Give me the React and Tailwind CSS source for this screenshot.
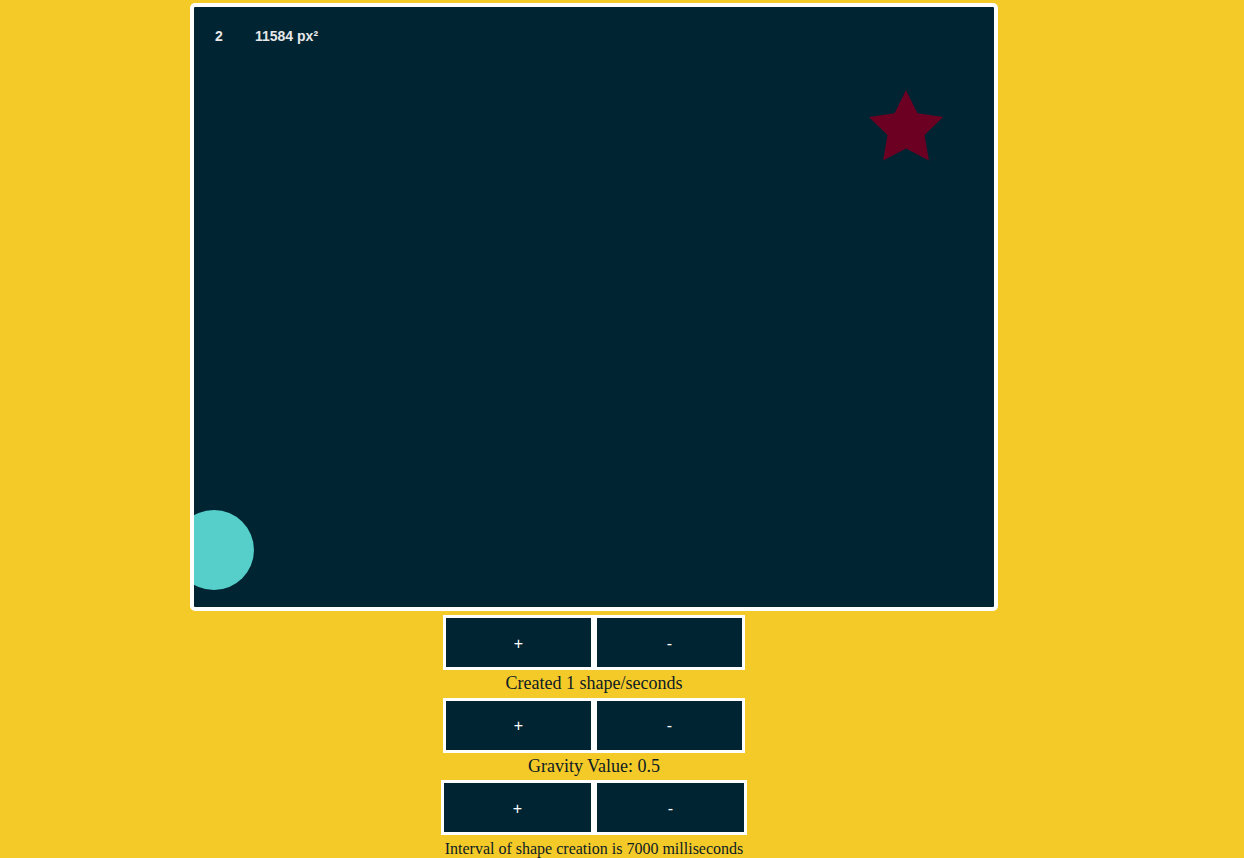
import React from 'react';

const canvasBg = 'bg-[#012433]';

function ControlRow({ wide }) {
	const size = wide ? 'w-[153px]' : 'w-[151px]';
	return (
		<div className="flex">
			<button
				className={`${size} h-[55px] pt-[2px] border-[3px] border-white ${canvasBg} text-white text-[16px] font-['Liberation_Sans',Arial,sans-serif]`}>
				+
			</button>
			<button
				className={`${size} h-[55px] pt-[2px] border-[3px] border-white ${canvasBg} text-white text-[16px] font-['Liberation_Sans',Arial,sans-serif]`}>
				-
			</button>
		</div>
	);
}

function Label({ children, small }) {
	return (
		<p
			className={`h-[27.5px] leading-[27.5px] ${small ? 'text-[16px]' : 'text-[18px]'} text-[#0d1b24] font-['Liberation_Serif','Times_New_Roman',serif] whitespace-nowrap`}>
			{children}
		</p>
	);
}

// 5-point star with inner radius at half the outer one
function starPoints(cx, cy, outer, inner) {
	const pts = [];
	for (let i = 0; i < 10; i++) {
		const r = i % 2 === 0 ? outer : inner;
		const a = -Math.PI / 2 + (i * Math.PI) / 5;
		pts.push(`${(cx + r * Math.cos(a)).toFixed(2)},${(cy + r * Math.sin(a)).toFixed(2)}`);
	}
	return pts.join(' ');
}

export default function App() {
	return (
		<div className="min-h-screen bg-[#f4ca29]">
			<div className="w-[1188px] flex flex-col items-center pt-[3px]">
				{/* Game canvas */}
				<div
					className={`relative w-[808px] h-[608px] border-4 border-white rounded-[5px] ${canvasBg} overflow-hidden`}>
					<svg
						width="800"
						height="600"
						viewBox="0 0 800 600"
						className="block">
						<circle cx="20" cy="543" r="40" fill="#56cfca" />
						<polygon points={starPoints(712, 122, 39, 19.5)} fill="#6b0022" />
					</svg>
					<span className="absolute left-[21px] top-[21px] text-[14px] leading-[16px] font-bold text-[#e8e8e8] font-['Liberation_Sans',Arial,sans-serif]">
						2
					</span>
					<span className="absolute left-[61px] top-[21px] text-[14px] leading-[16px] font-bold text-[#e8e8e8] font-['Liberation_Sans',Arial,sans-serif]">
						11584 px²
					</span>
				</div>

				{/* Controls */}
				<div className="mt-[4px] flex flex-col items-center">
					<ControlRow />
					<Label>Created 1 shape/seconds</Label>
					<ControlRow />
					<Label>Gravity Value: 0.5</Label>
					<ControlRow wide />
					<Label small>Interval of shape creation is 7000 milliseconds</Label>
				</div>
			</div>
		</div>
	);
}
